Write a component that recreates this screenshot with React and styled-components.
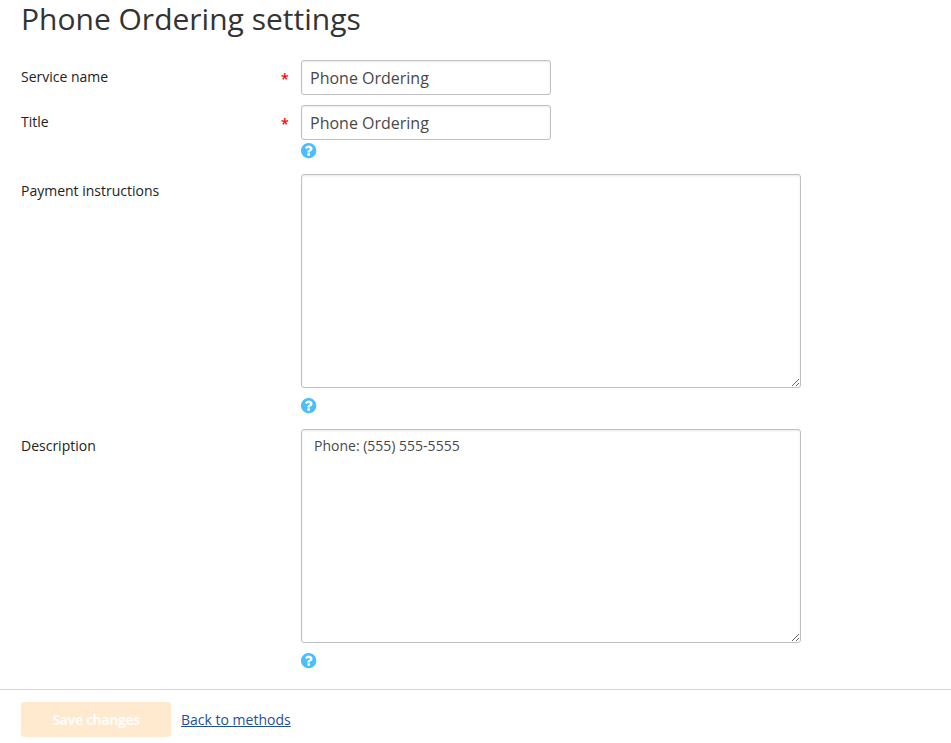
import React from "react";
import styled, { createGlobalStyle } from "styled-components";

const Global = createGlobalStyle`
  * { box-sizing: border-box; }
  body { margin: 0; background: #fff; font-family: "Open Sans", sans-serif; font-size: 14px; color: #222; }
`;
const Page = styled.main`
  height: 743px;
  display: flex;
  flex-direction: column;
`;
const Heading = styled.h1`
  margin: 0 0 0 21px;
  height: 60px;
  font-size: 30px;
  font-weight: 400;
  line-height: 38px;
  color: #333;
`;
const Row = styled.div`
  display: grid;
  grid-template-columns: 260px 20px 500px;
  padding-left: 21px;
  height: ${(p) => p.$height}px;
`;
const Label = styled.label`
  line-height: 20px;
  padding-top: 7px;
`;
const Required = styled.span`
  color: #f00;
  font-weight: 600;
  line-height: 20px;
  padding-top: 9px;
`;
const Field = styled.div`
  display: flex;
  flex-direction: column;
  align-items: flex-start;
`;
const Input = styled.input`
  width: 250px;
  height: 35px;
  padding: 0 8px;
  border: 1px solid #c0c0c0;
  border-radius: 3px;
  font: 16px "Open Sans", sans-serif;
  color: #484848;
  box-shadow: inset 0 1px 2px rgba(0, 0, 0, 0.09);
  outline: none;
`;
const TextArea = styled.textarea`
  display: block;
  width: 500px;
  height: 214px;
  padding: 6px 12px;
  border: 1px solid #c0c0c0;
  border-radius: 3px;
  font: 14px/20px "Open Sans", sans-serif;
  color: #484848;
  box-shadow: inset 0 1px 2px rgba(0, 0, 0, 0.09);
  outline: none;
  resize: both;
`;
const HelpIcon = styled.svg`
  display: block;
  width: 16px;
  height: 16px;
  margin-top: ${(p) => p.$gap}px;
  fill: #4abeff;
`;
const Footer = styled.footer`
  display: flex;
  align-items: flex-start;
  gap: 10px;
  height: 54px;
  padding: 12px 21px 0;
  border-top: 1px solid #d6d6d6;
`;
const SaveButton = styled.button`
  width: 150px;
  height: 35px;
  padding: 0;
  border: 0;
  border-radius: 3px;
  background: #ffe9cf;
  color: #fffdfa;
  font: 700 14px "Open Sans", sans-serif;
  letter-spacing: -0.5px;
`;
const BackLink = styled.a`
  color: #1f4fa0;
  line-height: 35px;
  text-decoration: underline;
`;

function Help({ gap = 10 }) {
  return (
    <HelpIcon $gap={gap} viewBox="128 128 1606 1606" role="img" aria-label="Help">
      <path d="M1024 1376v-192q0-14-9-23t-23-9h-192q-14 0-23 9t-9 23v192q0 14 9 23t23 9h192q14 0 23-9t9-23zm256-672q0-88-55.5-163t-138.5-116-170-41q-243 0-371 213-15 24 8 42l132 100q7 6 19 6 16 0 25-12 53-68 86-92 34-24 86-24 48 0 85.5 26t37.5 59q0 38-20 61t-68 45q-63 28-115.500 86.500t-52.500 125.500v36q0 14 9 23t23 9h192q14 0 23-9t9-23q0-19 21.500-49.500t54.500-49.500q32-18 49-28.500t46-35 44.500-48 28-60.500 12.500-81zm384 192q0 209-103 385.500t-279.500 279.500-385.500 103-385.500-103-279.500-279.500-103-385.500 103-385.500 279.500-279.500 385.500-103 385.500 103 279.500 279.500 103 385.500z" />
    </HelpIcon>
  );
}

export default function App() {
  return (
    <>
      <Global />
      <Page>
        <Heading>Phone Ordering settings</Heading>
        <Row $height={45}>
          <Label htmlFor="service">Service name</Label>
          <Required>*</Required>
          <Field><Input id="service" defaultValue="Phone Ordering" /></Field>
        </Row>
        <Row $height={69}>
          <Label htmlFor="title">Title</Label>
          <Required>*</Required>
          <Field><Input id="title" defaultValue="Phone Ordering" /><Help gap={3} /></Field>
        </Row>
        <Row $height={255}>
          <Label htmlFor="payment">Payment instructions</Label>
          <span />
          <Field><TextArea id="payment" /><Help /></Field>
        </Row>
        <Row $height={260}>
          <Label htmlFor="description">Description</Label>
          <span />
          <Field><TextArea id="description" defaultValue="Phone: (555) 555-5555" /><Help /></Field>
        </Row>
        <Footer>
          <SaveButton disabled>Save changes</SaveButton>
          <BackLink href="#">Back to methods</BackLink>
        </Footer>
      </Page>
    </>
  );
}
